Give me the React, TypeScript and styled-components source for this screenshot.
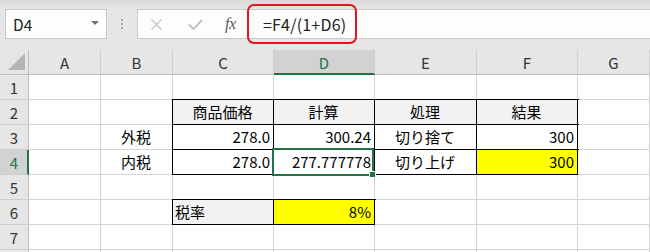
import React from 'react';
import styled, { createGlobalStyle } from 'styled-components';

const GlobalStyle = createGlobalStyle`
	html, body {
		margin: 0;
		padding: 0;
		background: #ffffff;
	}
	body {
		font-family: "Noto Sans CJK JP", "Noto Sans", sans-serif;
		color: #000;
	}
`;

const GREEN = '#217346';

const columns = ['A', 'B', 'C', 'D', 'E', 'F', 'G', ''];

type CellData = {
	text?: string;
	align?: 'left' | 'center' | 'right';
	boxed?: boolean;
	fill?: string;
	selected?: boolean;
};

const rows: Record<number, Record<string, CellData>> = {
	2: {
		C: { text: '商品価格', align: 'center', boxed: true, fill: '#f2f2f2' },
		D: { text: '計算', align: 'center', boxed: true, fill: '#f2f2f2' },
		E: { text: '処理', align: 'center', boxed: true, fill: '#f2f2f2' },
		F: { text: '結果', align: 'center', boxed: true, fill: '#f2f2f2' },
	},
	3: {
		B: { text: '外税', align: 'center' },
		C: { text: '278.0', align: 'right', boxed: true },
		D: { text: '300.24', align: 'right', boxed: true },
		E: { text: '切り捨て', align: 'center', boxed: true },
		F: { text: '300', align: 'right', boxed: true },
	},
	4: {
		B: { text: '内税', align: 'center' },
		C: { text: '278.0', align: 'right', boxed: true },
		D: { text: '277.777778', align: 'right', boxed: true, selected: true },
		E: { text: '切り上げ', align: 'center', boxed: true },
		F: { text: '300', align: 'right', boxed: true, fill: '#ffff00' },
	},
	6: {
		C: { text: '税率', align: 'left', boxed: true, fill: '#f2f2f2' },
		D: { text: '8%', align: 'right', boxed: true, fill: '#ffff00' },
	},
};

export default function App() {
	return (
		<Window>
			<GlobalStyle />
			<FormulaBar>
				<NameBox>
					<span>D4</span>
					<DropArrow />
				</NameBox>
				<Grip>
					<i />
					<i />
					<i />
				</Grip>
				<FormulaBox>
					<IconSlot>
						<svg width="13" height="11" viewBox="0 0 13 11">
							<path d="M1.5 0.5 L11.5 10.5 M11.5 0.5 L1.5 10.5" stroke="#c3c3c3" strokeWidth="1.4" fill="none" />
						</svg>
					</IconSlot>
					<IconSlot>
						<svg width="15" height="11" viewBox="0 0 15 11">
							<path d="M1 5.5 L5.5 10 L14 1" stroke="#c3c3c3" strokeWidth="2" fill="none" />
						</svg>
					</IconSlot>
					<Fx>fx</Fx>
					<FormulaText>=F4/(1+D6)</FormulaText>
				</FormulaBox>
				<Highlight />
			</FormulaBar>
			<Sheet>
				<Corner>
					<Triangle />
				</Corner>
				{columns.map((c, i) => (
					<ColHeader key={'h' + i} $active={c === 'D'}>
						{c}
					</ColHeader>
				))}
				{[1, 2, 3, 4, 5, 6, 7, 8].map((r) => (
					<React.Fragment key={r}>
						<RowHeader $active={r === 4}>{r <= 7 ? r : ''}</RowHeader>
						{columns.map((c, i) => {
							const cell = rows[r]?.[c] || {};
							return (
								<Cell
									key={r + '-' + i}
									$align={cell.align || 'left'}
									$boxed={!!cell.boxed}
									$fill={cell.fill}
								>
									{cell.text}
									{cell.selected && (
										<Selection>
											<Handle />
										</Selection>
									)}
								</Cell>
							);
						})}
					</React.Fragment>
				))}
			</Sheet>
		</Window>
	);
}

const Window = styled.div`
	width: 650px;
	height: 252px;
	overflow: hidden;
	background: #ffffff;
`;

const FormulaBar = styled.div`
	position: relative;
	height: 50px;
	box-sizing: border-box;
	padding: 9px 0 0 5px;
	display: flex;
	align-items: flex-start;
	background: linear-gradient(#dadada 0px, #e6e6e6 9px, #e6e6e6 100%);
`;

const NameBox = styled.div`
	width: 102px;
	height: 30px;
	box-sizing: border-box;
	border: 1px solid #c6c6c6;
	background: #fdfdfd;
	display: flex;
	align-items: center;
	justify-content: space-between;
	padding: 0 7px 0 7px;
	font-size: 15.5px;
	color: #222;
`;

const DropArrow = styled.span`
	width: 0;
	height: 0;
	border-left: 4px solid transparent;
	border-right: 4px solid transparent;
	border-top: 4px solid #707070;
	margin-top: -2px;
`;

const Grip = styled.div`
	width: 30px;
	height: 30px;
	display: flex;
	flex-direction: column;
	align-items: center;
	justify-content: center;
	gap: 2px;

	i {
		display: block;
		width: 2px;
		height: 2px;
		background: #a8a8a8;
	}
`;

const FormulaBox = styled.div`
	flex: 1;
	height: 30px;
	box-sizing: border-box;
	border: 1px solid #c6c6c6;
	border-right: none;
	background: #fdfdfd;
	display: flex;
	align-items: center;
	padding-left: 12px;
`;

const IconSlot = styled.span`
	width: 38px;
	display: flex;
	align-items: center;
	height: 100%;
`;

const Fx = styled.span`
	width: 38px;
	font-family: "Liberation Serif", serif;
	font-style: italic;
	font-size: 16px;
	color: #555;
	letter-spacing: -0.5px;
	margin-left: -1px;
`;

const FormulaText = styled.span`
	font-size: 16px;
	color: #222;
	letter-spacing: 0.2px;
`;

const Highlight = styled.div`
	position: absolute;
	left: 247px;
	top: 4px;
	width: 110px;
	height: 40px;
	box-sizing: border-box;
	border: 2px solid #e4161b;
	border-radius: 7px;
	pointer-events: none;
`;

const Sheet = styled.div`
	display: grid;
	grid-template-columns: 29px 72px 72px 101px 101px 102px 101px 72px 1fr;
	grid-template-rows: 25px repeat(8, 25px);
	font-size: 15px;
	line-height: 1;
`;

const HeaderBase = styled.div`
	box-sizing: border-box;
	background: #e6e6e6;
	color: #333;
	display: flex;
	align-items: center;
	justify-content: center;
`;

const Corner = styled(HeaderBase)`
	position: relative;
	border-right: 1px solid #bdbdbd;
	border-bottom: 1px solid #bdbdbd;
	align-items: flex-end;
	justify-content: flex-end;
	padding: 0 3px 4px 0;
`;

const Triangle = styled.span`
	width: 0;
	height: 0;
	border-left: 17px solid transparent;
	border-bottom: 17px solid #b4b4b4;
`;

const ColHeader = styled(HeaderBase)<{ $active: boolean }>`
	border-right: 1px solid #cfcfcf;
	border-bottom: ${(p) => (p.$active ? `2px solid ${GREEN}` : '1px solid #bdbdbd')};
	background: ${(p) => (p.$active ? '#d2d2d2' : '#e6e6e6')};
	color: ${(p) => (p.$active ? GREEN : '#333')};
	padding-top: ${(p) => (p.$active ? '1px' : '0')};
`;

const RowHeader = styled(HeaderBase)<{ $active: boolean }>`
	border-bottom: 1px solid #cfcfcf;
	border-right: ${(p) => (p.$active ? `2px solid ${GREEN}` : '1px solid #bdbdbd')};
	background: ${(p) => (p.$active ? '#d2d2d2' : '#e6e6e6')};
	color: ${(p) => (p.$active ? GREEN : '#333')};
	padding-left: ${(p) => (p.$active ? '1px' : '0')};
`;

const Cell = styled.div<{ $align: string; $boxed: boolean; $fill?: string }>`
	position: relative;
	box-sizing: border-box;
	background: ${(p) => p.$fill || '#ffffff'};
	border-right: 1px solid ${(p) => (p.$boxed ? '#000' : '#d4d4d4')};
	border-bottom: 1px solid ${(p) => (p.$boxed ? '#000' : '#d4d4d4')};
	box-shadow: ${(p) => (p.$boxed ? '0 0 0 1px #000' : 'none')};
	display: flex;
	align-items: center;
	justify-content: ${(p) =>
		p.$align === 'right' ? 'flex-end' : p.$align === 'center' ? 'center' : 'flex-start'};
	padding: 0 3px 1px 2px;
	white-space: nowrap;
`;

const Selection = styled.div`
	position: absolute;
	left: -2px;
	top: -2px;
	width: 102px;
	height: 28px;
	box-sizing: border-box;
	border: 2px solid ${GREEN};
	z-index: 2;
`;

const Handle = styled.span`
	position: absolute;
	right: -4px;
	bottom: -4px;
	width: 5px;
	height: 5px;
	background: ${GREEN};
	border: 1px solid #ffffff;
`;
